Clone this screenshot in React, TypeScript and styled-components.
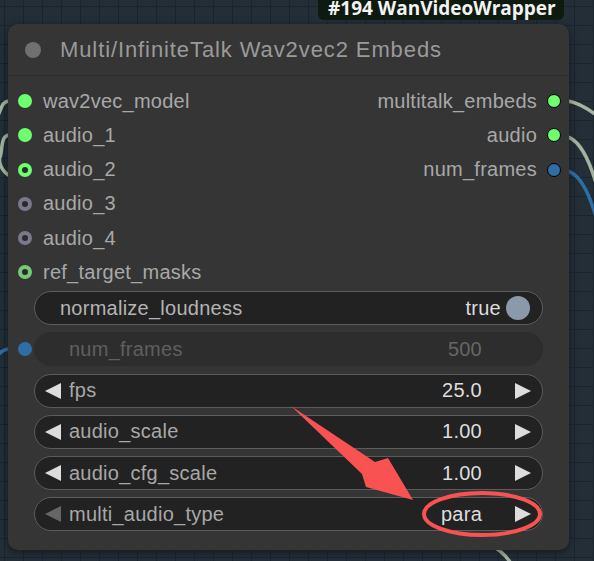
import React from "react";
import styled, { createGlobalStyle } from "styled-components";

const GlobalStyle = createGlobalStyle`
  html, body {
    margin: 0;
    padding: 0;
    background: #222c35;
  }
  * {
    box-sizing: border-box;
  }
`;

const Canvas = styled.div`
  position: relative;
  width: 594px;
  height: 561px;
  overflow: hidden;
  background-color: #232e37;
  background-image: linear-gradient(#1b242c 1px, transparent 1px),
    linear-gradient(90deg, #1b242c 1px, transparent 1px);
  background-size: 19px 19px;
  background-position: 4px 6px;
  font-family: "Liberation Sans", Arial, sans-serif;
`;

const Overlay = styled.svg<{ $z: number }>`
  position: absolute;
  left: 0;
  top: 0;
  width: 594px;
  height: 561px;
  pointer-events: none;
  z-index: ${(p) => p.$z};
`;

const Badge = styled.div`
  position: absolute;
  left: 318px;
  top: -6px;
  width: 246px;
  height: 26px;
  padding: 7px 0 0 10px;
  background: #0e1a0f;
  border-radius: 6px;
  color: #f2f2f2;
  font-family: "Open Sans", "Noto Sans", sans-serif;
  font-weight: 700;
  font-size: 19px;
  line-height: 14px;
  white-space: nowrap;
  z-index: 2;
`;

const Node = styled.div`
  position: absolute;
  left: 8px;
  top: 24px;
  width: 561px;
  height: 526px;
  background: #353535;
  border-radius: 10px;
  box-shadow: 0 2px 8px rgba(0, 0, 0, 0.45);
  z-index: 1;
  display: flex;
  flex-direction: column;
`;

const TitleBar = styled.div`
  height: 52px;
  display: flex;
  align-items: center;
  gap: 19px;
  padding-left: 17px;
  border-bottom: 1px solid #2c2c2c;
  color: #9a9a9a;
  font-size: 22px;
  letter-spacing: 0.9px;
`;

const TitleDot = styled.span`
  width: 16px;
  height: 16px;
  border-radius: 50%;
  background: #707070;
`;

const Slots = styled.div`
  display: flex;
  justify-content: space-between;
  padding: 8px 8px 1.5px 10px;
`;

const SlotColumn = styled.div<{ $right?: boolean }>`
  display: flex;
  flex-direction: column;
  align-items: ${(p) => (p.$right ? "flex-end" : "flex-start")};
`;

const Slot = styled.div<{ $right?: boolean }>`
  height: 34.25px;
  display: flex;
  align-items: center;
  flex-direction: ${(p) => (p.$right ? "row-reverse" : "row")};
  gap: ${(p) => (p.$right ? "10px" : "11px")};
  color: #a8a8a8;
  font-size: 20px;
  letter-spacing: 0.25px;
`;

const Dot = styled.span<{ $color: string; $ring?: boolean; $outline?: boolean }>`
  width: 14px;
  height: 14px;
  border-radius: 50%;
  flex: none;
  background: ${(p) => (p.$ring ? "#2a2a2a" : p.$color)};
  border: ${(p) =>
    p.$ring ? `4px solid ${p.$color}` : p.$outline ? "1.5px solid #000" : "none"};
`;

const Widgets = styled.div`
  display: flex;
  flex-direction: column;
  gap: 7.3px;
  margin: 0 26px 0 26px;
`;

const Widget = styled.div<{ $disabled?: boolean; $padLeft?: number }>`
  position: relative;
  height: 34px;
  border-radius: 17px;
  display: flex;
  align-items: center;
  padding: 0 11px 0 ${(p) => p.$padLeft ?? 10}px;
  background: ${(p) => (p.$disabled ? "#2d2d2d" : "#222222")};
  border: 1.5px solid ${(p) => (p.$disabled ? "transparent" : "#5c5c5c")};
  font-size: 20px;
  letter-spacing: 0.25px;
`;

const Label = styled.span<{ $dim?: boolean; $bright?: boolean }>`
  flex: 1;
  color: ${(p) => (p.$dim ? "#5f5f5f" : p.$bright ? "#b4b4b4" : "#a8a8a8")};
`;

const Value = styled.span<{ $dim?: boolean }>`
  color: ${(p) => (p.$dim ? "#666666" : "#dddddd")};
`;

const Arrow = styled.span<{ $dir: "left" | "right"; $dim?: boolean; $hidden?: boolean }>`
  width: 0;
  height: 0;
  flex: none;
  border-top: 8px solid transparent;
  border-bottom: 8px solid transparent;
  ${(p) =>
    p.$dir === "left"
      ? `border-right: 16px solid ${p.$dim ? "#666" : "#dddddd"}; margin-right: 8px;`
      : `border-left: 16px solid #dddddd; margin-left: 33px;`}
  visibility: ${(p) => (p.$hidden ? "hidden" : "visible")};
`;

const Toggle = styled.span`
  width: 24px;
  height: 24px;
  border-radius: 50%;
  background: #8a9aab;
  margin-left: 5px;
  margin-right: 1px;
`;

const ConvertedDot = styled.span`
  position: absolute;
  left: -17px;
  top: 9px;
  width: 14px;
  height: 14px;
  border-radius: 50%;
  background: #2e6ea6;
`;

const GREEN = "#6dff6d";
const GRAY = "#7a788e";

const inputs = [
  { name: "wav2vec_model", color: GREEN, ring: false },
  { name: "audio_1", color: GREEN, ring: false },
  { name: "audio_2", color: GREEN, ring: true },
  { name: "audio_3", color: GRAY, ring: true },
  { name: "audio_4", color: GRAY, ring: true },
  { name: "ref_target_masks", color: "#78c878", ring: true },
];

const outputs = [
  { name: "multitalk_embeds", color: GREEN },
  { name: "audio", color: GREEN },
  { name: "num_frames", color: "#2e6ea6" },
];

const numbers = [
  { name: "fps", value: "25.0" },
  { name: "audio_scale", value: "1.00" },
  { name: "audio_cfg_scale", value: "1.00" },
];

const Wires = () => (
  <Overlay $z={0} viewBox="0 0 594 561">
    <g fill="none" strokeWidth="3.5" strokeLinecap="round">
      <path d="M 10 101 C 0 101, 2 112, -6 122" stroke="#a3b3a0" />
      <path d="M 10 135 C 0 135, 3 150, 0 157 C -2 162, 2 172, 10 176" stroke="#a3b3a0" />
      <path d="M 8 349 C 0 350, -2 356, -8 360" stroke="#2e6ea6" />
      <path d="M 568 101 C 580 103, 590 110, 600 118" stroke="#a3b3a0" />
      <path d="M 568 137 C 582 142, 592 165, 600 198" stroke="#a3b3a0" />
      <path d="M 568 171 C 582 176, 590 195, 600 230" stroke="#2e6ea6" />
      <path d="M 492 546 C 500 550, 506 555, 512 565" stroke="#a3b3a0" />
    </g>
  </Overlay>
);

const Annotation = () => (
  <Overlay $z={3} viewBox="0 0 594 561">
    <polygon
      points="291,406 375,462 388,458 413,500 366,487 362,474"
      fill="#f85252"
    />
    <ellipse
      cx="482"
      cy="514"
      rx="58"
      ry="21"
      fill="none"
      stroke="#f85252"
      strokeWidth="4"
    />
  </Overlay>
);

export default function App() {
  return (
    <>
      <GlobalStyle />
      <Canvas>
        <Wires />
        <Badge>#194 WanVideoWrapper</Badge>
        <Node>
          <TitleBar>
            <TitleDot />
            Multi/InfiniteTalk Wav2vec2 Embeds
          </TitleBar>
          <Slots>
            <SlotColumn>
              {inputs.map((s) => (
                <Slot key={s.name}>
                  <Dot $color={s.color} $ring={s.ring} />
                  {s.name}
                </Slot>
              ))}
            </SlotColumn>
            <SlotColumn $right>
              {outputs.map((s) => (
                <Slot key={s.name} $right>
                  <Dot $color={s.color} $outline />
                  {s.name}
                </Slot>
              ))}
            </SlotColumn>
          </Slots>
          <Widgets>
            <Widget $padLeft={25}>
              <Label $bright>normalize_loudness</Label>
              <Value>true</Value>
              <Toggle />
            </Widget>
            <Widget $disabled>
              <ConvertedDot />
              <Arrow $dir="left" $hidden />
              <Label $dim>num_frames</Label>
              <Value $dim>500</Value>
              <Arrow $dir="right" $hidden />
            </Widget>
            {numbers.map((n) => (
              <Widget key={n.name}>
                <Arrow $dir="left" />
                <Label>{n.name}</Label>
                <Value>{n.value}</Value>
                <Arrow $dir="right" />
              </Widget>
            ))}
            <Widget>
              <Arrow $dir="left" $dim />
              <Label>multi_audio_type</Label>
              <Value>para</Value>
              <Arrow $dir="right" />
            </Widget>
          </Widgets>
        </Node>
        <Annotation />
      </Canvas>
    </>
  );
}
